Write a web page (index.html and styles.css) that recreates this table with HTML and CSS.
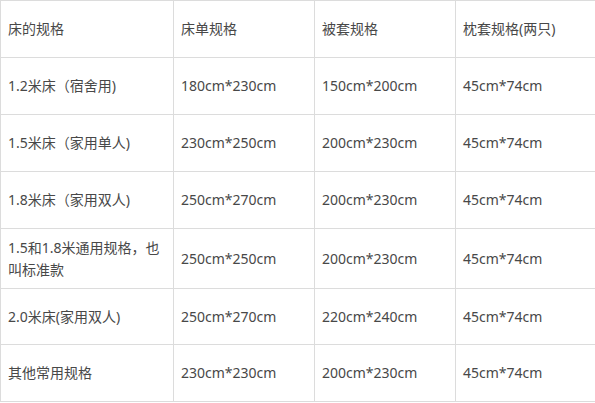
FILE: index.html
```html
<!DOCTYPE html>
<html lang="zh-CN">
<head>
<meta charset="utf-8">
<link rel="stylesheet" href="styles.css">
</head>
<body>
<table class="spec">
  <colgroup>
    <col class="c1"><col class="c2"><col class="c3"><col class="c4">
  </colgroup>
  <tbody>
    <tr class="r"><td>床的规格</td><td>床单规格</td><td>被套规格</td><td>枕套规格(两只)</td></tr>
    <tr class="r"><td>1.2米床（宿舍用)</td><td>180cm*230cm</td><td>150cm*200cm</td><td>45cm*74cm</td></tr>
    <tr class="r"><td>1.5米床（家用单人)</td><td>230cm*250cm</td><td>200cm*230cm</td><td>45cm*74cm</td></tr>
    <tr class="r"><td>1.8米床（家用双人)</td><td>250cm*270cm</td><td>200cm*230cm</td><td>45cm*74cm</td></tr>
    <tr class="r tall"><td>1.5和1.8米通用规格，也叫标准款</td><td>250cm*250cm</td><td>200cm*230cm</td><td>45cm*74cm</td></tr>
    <tr class="r short"><td>2.0米床(家用双人)</td><td>250cm*270cm</td><td>220cm*240cm</td><td>45cm*74cm</td></tr>
    <tr class="r"><td>其他常用规格</td><td>230cm*230cm</td><td>200cm*230cm</td><td>45cm*74cm</td></tr>
  </tbody>
</table>
</body>
</html>
```
FILE: styles.css
```css
html, body {
  margin: 0;
  padding: 0;
  background: #fff;
}
.spec {
  border-collapse: collapse;
  table-layout: fixed;
  width: 595px;
  font-family: "Noto Sans", "Noto Sans CJK SC", sans-serif;
  font-size: 14px;
  line-height: 22px;
  color: #484848;
}
.c1 { width: 173px; }
.c2 { width: 141px; }
.c3 { width: 141px; }
.c4 { width: 140px; }
.spec td {
  border: 1px solid #dcdcdc;
  padding: 0 7px;
  vertical-align: middle;
  height: 57px;
  box-sizing: border-box;
}
.spec tr.tall td { height: 60px; }
.spec tr.short td { height: 56px; }
```
